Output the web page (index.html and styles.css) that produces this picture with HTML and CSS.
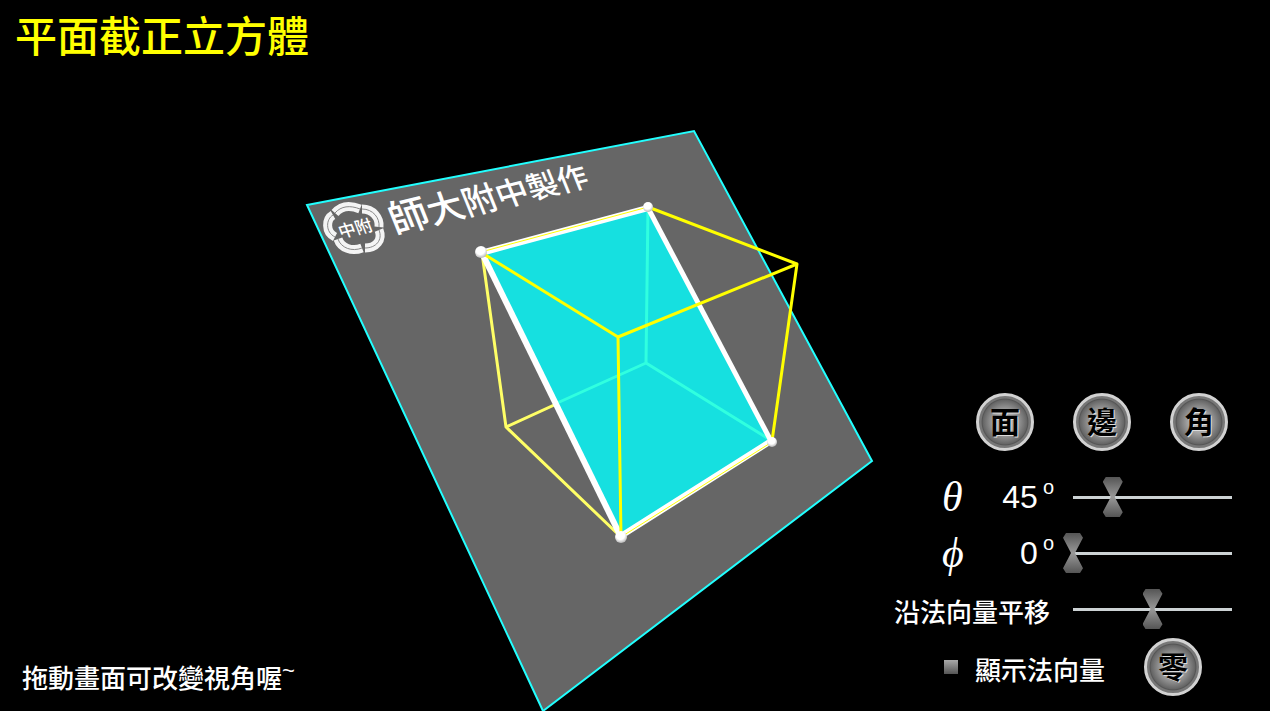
FILE: index.html
```html
<!DOCTYPE html>
<html lang="zh-Hant">
<head>
<meta charset="utf-8">
<meta name="viewport" content="width=device-width, initial-scale=1">
<title>平面截正立方體</title>
<link rel="stylesheet" href="styles.css">
</head>
<body>
<main class="stage">
  <svg class="scene" viewBox="0 0 1270 711" role="img" aria-label="平面截正立方體">
    <defs>
      <radialGradient id="ball" cx="45%" cy="35%" r="65%">
        <stop offset="0.55" stop-color="#fff"/>
        <stop offset="1" stop-color="#b4b4b4"/>
      </radialGradient>
    </defs>
    <!-- cutting plane -->
    <polygon class="plane" points="307,205 694,131 872,461 543,711"/>
    <!-- maker's mark printed on the plane -->
    <g class="emblem">
      <path class="emblem-band" d="M335 213C341 206 350 205 360 209M362 209C373 209 380 218 379 227M379 230C383 240 376 248 365 248M362 248C352 252 341 248 338 239M335 237C325 232 326 219 333 215"/>
      <path class="emblem-line" d="M335 213C341 206 350 205 360 209M362 209C373 209 380 218 379 227M379 230C383 240 376 248 365 248M362 248C352 252 341 248 338 239M335 237C325 232 326 219 333 215"/>
      <text class="emblem-text" transform="translate(341 238) rotate(-13) skewX(8)">中附</text>
    </g>
    <text class="maker" transform="translate(395 234) rotate(-14) skewX(8)"><tspan font-size="39">師</tspan><tspan font-size="36">大</tspan><tspan font-size="34">附</tspan><tspan font-size="32">中</tspan><tspan font-size="31">製</tspan><tspan font-size="30">作</tspan></text>
    <!-- edges behind the plane -->
    <path class="edge-back" d="M482 253L506 427L646 363M506 427L621 537"/>
    <!-- section -->
    <polygon class="section" points="481,252 648,207 772,441 621,537"/>
    <path class="edge-under" d="M648 207L646 363L555 404M646 363L772 441"/>
    <path class="cut-side" d="M481 253L648 208M771 441L621 536"/>
    <path class="cut-near" d="M482 253L621 537"/>
    <path class="cut-right" d="M648 208L771 441"/>
    <!-- edges in front of the plane -->
    <path class="edge-front" d="M482 253L618 337L797 264L648 207M797 264L772 441M618 337L621 537"/>
    <path class="edge-thin" d="M481 252L648 207M772 442L621 537"/>
    <circle cx="481" cy="252" r="6" fill="url(#ball)"/>
    <circle cx="648" cy="207" r="5" fill="url(#ball)"/>
    <circle cx="772" cy="442" r="5" fill="url(#ball)"/>
    <circle cx="621" cy="537" r="6" fill="url(#ball)"/>
  </svg>

  <div class="overlay">
    <h1 class="title">平面截正立方體</h1>
    <div class="bottom">
      <p class="hint">拖動畫面可改變視角喔<span class="tilde">~</span></p>
      <form class="panel">
        <div class="presets">
          <button class="round" type="button">面</button>
          <button class="round" type="button">邊</button>
          <button class="round" type="button">角</button>
        </div>
        <div class="row">
          <label class="symbol" for="theta">θ</label>
          <output class="angle" for="theta">45<sup>o</sup></output>
          <input class="slider" id="theta" type="range" min="0" max="180" value="45">
        </div>
        <div class="row">
          <label class="symbol" for="phi">ϕ</label>
          <output class="angle" for="phi">0<sup>o</sup></output>
          <input class="slider" id="phi" type="range" min="0" max="360" value="0">
        </div>
        <div class="row">
          <label class="shift" for="shift">沿法向量平移</label>
          <input class="slider" id="shift" type="range" min="-100" max="100" value="0">
        </div>
        <div class="last">
          <label class="normal"><input class="tick" type="checkbox"><span class="caption">顯示法向量</span></label>
          <button class="round" type="button">零</button>
        </div>
      </form>
    </div>
  </div>
</main>
</body>
</html>
```
FILE: styles.css
```css
* { box-sizing: border-box; }

body {
  margin: 0;
  background: #000;
  color: #fff;
  font-family: "Noto Sans CJK TC", sans-serif;
}

.stage {
  display: grid;
  grid-template: minmax(0, 1fr) / minmax(0, 1fr);
  height: 100vh;
  overflow: hidden;
}

.scene,
.overlay { grid-area: 1 / 1; }

.scene {
  display: block;
  width: 100%;
  height: 100%;
}

.plane { fill: #666; stroke: #2ff; stroke-width: 2; }
.section { fill: #16e0e0; }
.scene path { fill: none; stroke-linejoin: round; }
.edge-back { stroke: #ff6; stroke-width: 3; }
.edge-under { stroke: #30ffe0; stroke-width: 3; }
.edge-front { stroke: #ff0; stroke-width: 3; }
.edge-thin { stroke: #ff0; stroke-width: 1; }
.cut-near { stroke: #fff; stroke-width: 6; }
.cut-side { stroke: #fff; stroke-width: 6; }
.cut-right { stroke: #fff; stroke-width: 5; }

.maker { fill: #fff; font-weight: 500; }
.emblem-text { fill: #fff; font-size: 17px; font-weight: 500; }
.scene .emblem-band { stroke: #f4f4f4; stroke-width: 9; }
.scene .emblem-line { stroke: #888; stroke-width: 1; }

.overlay {
  display: flex;
  flex-direction: column;
  justify-content: space-between;
}

.title {
  margin: 0;
  padding: 4px 15px;
  color: #ff0;
  font-size: 42px;
  font-weight: 500;
  line-height: 60px;
}

.bottom {
  display: flex;
  align-items: flex-end;
  justify-content: space-between;
}

.hint {
  margin: 0;
  padding: 0 0 16px 22px;
  font-size: 26px;
  font-weight: 500;
  line-height: 36px;
}

.tilde {
  font-family: "Liberation Sans", sans-serif;
  font-size: 22px;
  line-height: 0;
  vertical-align: super;
}

.panel {
  display: flex;
  flex-direction: column;
  width: 380px;
  padding: 0 38px 15px 0;
}

.presets {
  display: flex;
  justify-content: space-between;
  padding: 0 4px 18px 86px;
}

.round {
  width: 58px;
  height: 58px;
  padding: 0 0 4px;
  border: 3px solid #d2d2d2;
  border-radius: 50%;
  background: radial-gradient(circle closest-side at 50% 50%, #c0c0c0 0, #a8a8a8 40%, #666 84%, #555 88%, #777 92%, #777 100%);
  color: #000;
  font: 700 30px/40px "Noto Sans CJK TC", sans-serif;
  text-shadow: 1px 1px 0 #ddd;
}

.row {
  display: flex;
  align-items: center;
  height: 56px;
}

.symbol {
  width: 64px;
  padding-left: 10px;
  margin-left: 42px;
  font: italic 42px/44px "Liberation Serif", serif;
}

.angle {
  display: flex;
  flex: 1;
  justify-content: flex-end;
  gap: 5px;
  padding-right: 9px;
  font: 32px/36px "Liberation Sans", sans-serif;
}

.angle sup { font-size: 20px; line-height: 16px; }

.shift {
  flex: 1;
  padding: 4px 0 0 4px;
  font-size: 26px;
  font-weight: 500;
  line-height: 36px;
}

.slider {
  appearance: none;
  flex: none;
  width: 179px;
  height: 40px;
  margin: 0 -10px 0 0;
  background: linear-gradient(#ccd2d4, #ccd2d4) center / 159px 3px no-repeat;
}

.slider::-webkit-slider-thumb {
  appearance: none;
  width: 20px;
  height: 40px;
  background: linear-gradient(#555, #999 50%, #555);
  clip-path: polygon(15% 0, 85% 0, 100% 12%, 60% 50%, 100% 88%, 85% 100%, 15% 100%, 0 88%, 40% 50%, 0 12%);
}

.last {
  display: flex;
  align-items: center;
  justify-content: space-between;
  padding: 1px 30px 0 54px;
}

.normal {
  display: flex;
  align-items: center;
  gap: 17px;
  font-size: 26px;
  font-weight: 500;
  line-height: 36px;
}

.caption { padding-top: 4px; }

.tick {
  appearance: none;
  width: 14px;
  height: 14px;
  margin: 0;
  background: linear-gradient(#aaa, #555);
}
```
